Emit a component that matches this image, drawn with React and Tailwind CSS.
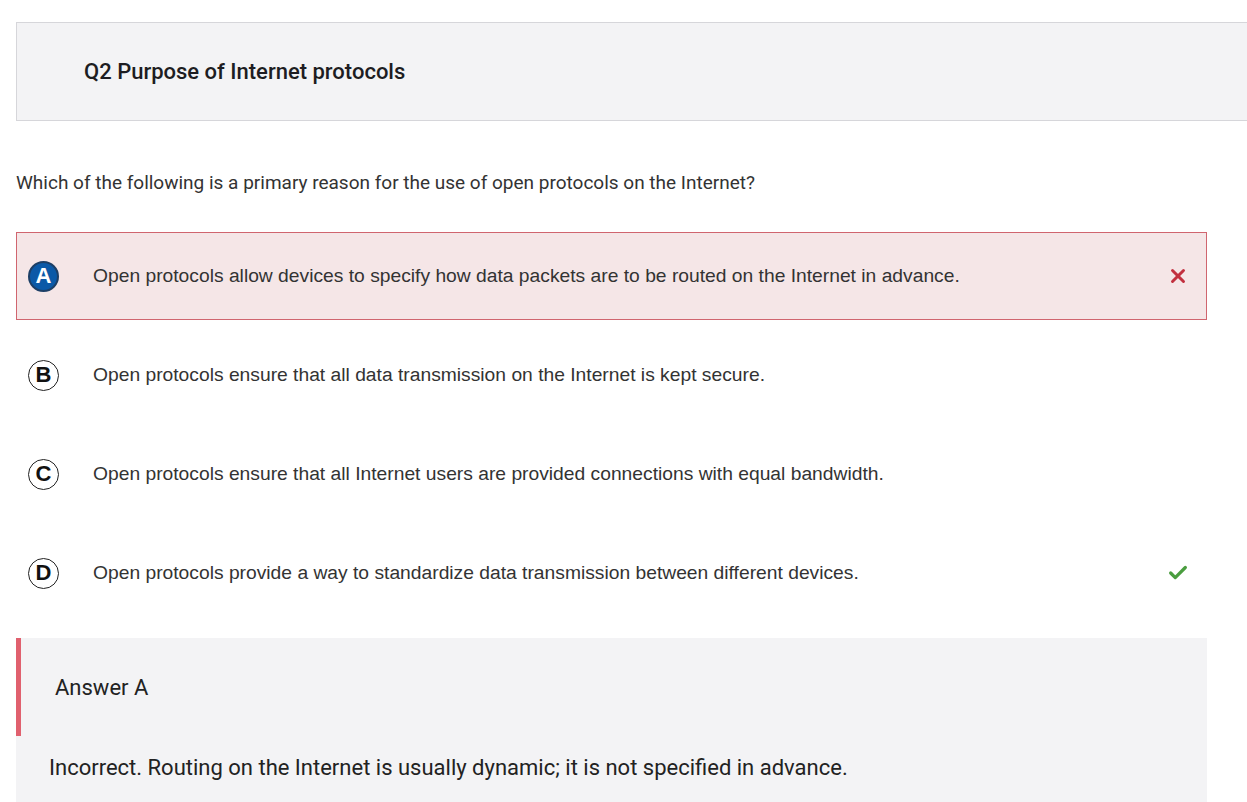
import { Check, X } from 'lucide-react'

const options = [
  { letter: 'A', text: 'Open protocols allow devices to specify how data packets are to be routed on the Internet in advance.', state: 'wrong' },
  { letter: 'B', text: 'Open protocols ensure that all data transmission on the Internet is kept secure.' },
  { letter: 'C', text: 'Open protocols ensure that all Internet users are provided connections with equal bandwidth.' },
  { letter: 'D', text: 'Open protocols provide a way to standardize data transmission between different devices.', state: 'right' },
]

function Option({ letter, text, state }) {
  const picked = state === 'wrong'
  return (
    <div
      className={
        'flex items-center h-[88px] pl-[11px] pr-[17px] border ' +
        (picked ? 'bg-[#f5e6e7] border-[#d0656f]' : 'border-transparent')
      }
    >
      <span
        className={
          'w-[31px] h-[31px] rounded-full flex items-center justify-center text-[22px] font-bold shrink-0 leading-none ' +
          (picked ? 'bg-[#0b59a7] border-2 border-[#1d3f66] text-white' : 'border-[1.5px] border-[#222] text-[#111]')
        }
        style={{ fontFamily: '"Liberation Sans", Arial, sans-serif' }}
      >
        {letter}
      </span>
      <span
        className="ml-[34px] flex-1 text-[19.25px] text-[#333]"
        style={{ fontFamily: '"Liberation Sans", Arial, sans-serif' }}
      >
        {text}
      </span>
      {state === 'wrong' && <X className="w-[22px] h-[22px] text-[#c2303f]" strokeWidth={3.2} />}
      {state === 'right' && <Check className="w-[22px] h-[22px] text-[#4a9d3f]" strokeWidth={3.5} />}
    </div>
  )
}

export default function App() {
  return (
    <div className="bg-white min-h-screen overflow-hidden pt-[22px] pl-[16px]" style={{ fontFamily: 'Roboto, sans-serif' }}>
      <div className="w-[1300px] h-[99px] bg-[#f3f3f5] border border-[#d6d6da] flex items-center pl-[67px]">
        <h2 className="text-[22px] font-medium text-[#1d1d22]">Q2 Purpose of Internet protocols</h2>
      </div>

      <p className="mt-[48px] text-[19px] leading-[28px] text-[#333]">
        Which of the following is a primary reason for the use of open protocols on the Internet?
      </p>

      <div className="w-[1191px] mt-[35px] flex flex-col gap-[11px]">
        {options.map((o) => (
          <Option key={o.letter} {...o} />
        ))}
      </div>

      <div className="w-[1191px] mt-[21px] bg-[#f3f3f5]">
        <div className="h-[98px] border-l-[5px] border-[#e0606e] flex items-center pl-[34px]">
          <span className="text-[22px] text-[#222]">Answer A</span>
        </div>
        <p className="pl-[33px] pt-[15px] pb-[40px] text-[22px] text-[#222]">
          Incorrect. Routing on the Internet is usually dynamic; it is not specified in advance.
        </p>
      </div>
    </div>
  )
}
